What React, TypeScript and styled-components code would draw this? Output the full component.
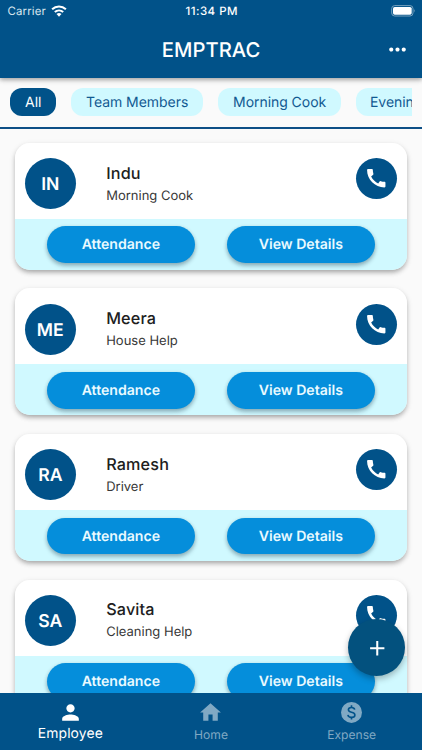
import React from "react";
import styled, { createGlobalStyle } from "styled-components";
import { MdAdd, MdCall, MdHome, MdMoreHoriz, MdPerson } from "react-icons/md";

const navy = "#015289";
const ice = "#d0f9ff";

const GlobalStyle = createGlobalStyle`
  * { box-sizing: border-box; }
  body { margin: 0; background: #fafafa; font-family: Inter, "Liberation Sans", sans-serif; text-rendering: geometricPrecision; }
  svg { display: block; flex: none; }
`;

const Screen = styled.div`
  position: relative;
  display: flex;
  flex-direction: column;
  width: 422px;
  height: 750px;
  overflow: hidden;
  background: #fafafa;
`;

const Header = styled.header`
  position: relative;
  z-index: 1;
  flex: none;
  height: 77.6px;
  background: ${navy};
  color: #fff;
  box-shadow: 0 2px 4px rgba(0, 0, 0, 0.26), 0 1px 7px rgba(0, 0, 0, 0.14);
`;

const StatusBar = styled.div`
  display: grid;
  grid-template-columns: 1fr auto 1fr;
  align-items: center;
  height: 22px;
  padding: 0 6px 0 7.5px;
`;

const Carrier = styled.div`
  display: flex;
  align-items: center;
  gap: 5px;
  font-size: 11.4px;
  letter-spacing: 0.15px;
  color: #dbe8f0;
`;

const Clock = styled.div`
  font-size: 11.5px;
  font-weight: 500;
  letter-spacing: 0.5px;
  color: #fff;
`;

const Battery = styled.div`
  justify-self: end;
`;

const TitleBar = styled.div`
  display: grid;
  grid-template-columns: 1fr auto 1fr;
  align-items: center;
  height: 55px;
  padding: 0 12px;
`;

const Title = styled.h1`
  grid-column: 2;
  margin: 0;
  font-size: 20.2px;
  line-height: 24px;
  font-weight: 500;
  letter-spacing: 0.05px;
`;

const MoreButton = styled.div`
  justify-self: end;
`;

const Filters = styled.nav`
  flex: none;
  display: flex;
  gap: 15.3px;
  height: 51.2px;
  margin: 0 10.2px;
  padding-top: 10.4px;
  overflow: hidden;
`;

const Chip = styled.div<{ $width: number; $active?: boolean }>`
  flex: none;
  width: ${(p) => p.$width}px;
  height: 28.4px;
  border-radius: 12px;
  background: ${(p) => (p.$active ? navy : ice)};
  color: ${(p) => (p.$active ? "#fff" : "#125a92")};
  text-align: center;
  font-size: 14px;
  line-height: 29px;
  letter-spacing: -0.05px;
  white-space: nowrap;
`;

const Rule = styled.div`
  flex: none;
  height: 2px;
  margin-top: -2px;
  background: #0d4f86;
`;

const List = styled.main`
  flex: 1;
  min-height: 0;
  overflow: hidden;
  padding: 14px 15px 0;
`;

const Card = styled.article`
  height: 127.1px;
  margin-bottom: 18.5px;
  border-radius: 15px;
  background: linear-gradient(#fff 76.4px, ${ice} 76.4px);
  box-shadow: 0 3px 5px -1px rgba(0, 0, 0, 0.28), 0 2px 6px rgba(0, 0, 0, 0.12);
`;

const Profile = styled.div`
  display: flex;
  align-items: flex-start;
  height: 76.4px;
  padding: 15.2px 9.8px 0 9.8px;
`;

const Avatar = styled.div`
  width: 51px;
  height: 51px;
  border-radius: 50%;
  background: ${navy};
  color: #fff;
  text-align: center;
  font-size: 17.6px;
  line-height: 53px;
  font-weight: 600;
`;

const Person = styled.div`
  flex: 1;
  padding: 4.7px 0 0 30.4px;
`;

const Name = styled.div`
  font-size: 16.2px;
  line-height: 21px;
  font-weight: 500;
  letter-spacing: 0.15px;
  color: #202020;
`;

const Role = styled.div`
  margin-top: 3px;
  font-size: 13px;
  line-height: 19px;
  color: #383838;
`;

const CallButton = styled.div`
  display: grid;
  place-items: center;
  width: 41px;
  height: 41px;
  border-radius: 50%;
  background: ${navy};
  color: #fff;
`;

const Actions = styled.div`
  display: flex;
  gap: 32.3px;
  padding: 7.2px 0 0 32px;
`;

const ActionButton = styled.div`
  width: 147.7px;
  height: 36.6px;
  border-radius: 19px;
  background: #058edb;
  color: #e9faff;
  text-align: center;
  font-size: 14.1px;
  line-height: 37px;
  font-weight: 600;
  letter-spacing: 0;
  box-shadow: 0 3px 4px rgba(0, 35, 60, 0.28), 0 1px 4px rgba(0, 0, 0, 0.12);
`;

const AddButton = styled.div`
  position: absolute;
  z-index: 2;
  left: 348.4px;
  top: 619.4px;
  display: grid;
  place-items: center;
  width: 57px;
  height: 57px;
  border-radius: 50%;
  background: #03517e;
  color: #fff;
  box-shadow: 0 3px 6px rgba(0, 0, 0, 0.28);
`;

const BottomBar = styled.footer`
  position: relative;
  z-index: 1;
  flex: none;
  display: grid;
  grid-template-columns: repeat(3, 1fr);
  height: 57.5px;
  background: ${navy};
`;

const Tab = styled.div<{ $active?: boolean }>`
  display: flex;
  flex-direction: column;
  align-items: center;
  padding-top: 7.3px;
  color: ${(p) => (p.$active ? "#fff" : "#80a9c4")};
  font-size: ${(p) => (p.$active ? 13.9 : 12.1)}px;
  line-height: ${(p) => (p.$active ? 18 : 19)}px;
  letter-spacing: ${(p) => (p.$active ? 0.12 : 0)}px;
`;

const people = [
  { name: "Indu", role: "Morning Cook" },
  { name: "Meera", role: "House Help" },
  { name: "Ramesh", role: "Driver" },
  { name: "Savita", role: "Cleaning Help" },
];

const WifiIcon = () => (
  <svg width="16" height="12" viewBox="0 0 16 12" fill="none" stroke="#fff" strokeWidth="2">
    <path d="M1.1 4.3C5 .6 11 .6 14.9 4.3" />
    <path d="M3.8 7.1C6.2 4.9 9.8 4.9 12.2 7.1" />
    <path d="M8 11.7 5.5 9.1Q8 7 10.5 9.1Z" fill="#fff" stroke="none" />
  </svg>
);

const BatteryIcon = () => (
  <svg width="25" height="12" viewBox="0 0 25 12">
    <rect x=".7" y=".6" width="21.3" height="10.4" rx="3" fill="none" stroke="#76a0bd" />
    <rect x="2" y="1.9" width="18.7" height="7.8" rx="1.7" fill="#fff" />
    <path d="M23.2 4q1.4 1.7 0 3.5Z" fill="#80a9c4" />
  </svg>
);

const DollarIcon = () => (
  <svg width="25" height="25" viewBox="0 0 25 25" fill="none" stroke={navy} strokeWidth="1.6">
    <circle cx="12.5" cy="12.4" r="10.5" fill="#80a9c4" stroke="none" />
    <path d="M15.7 9.7C15.4 8.1 14.2 7.5 12.5 7.5c-1.9 0-3.1.9-3.1 2.3 0 1.5 1.2 2 3.1 2.4 2.2.5 3.4 1.2 3.4 2.8 0 1.5-1.3 2.4-3.4 2.4-2 0-3.3-.8-3.6-2.5" />
    <path d="M12.5 5.3v2.4M12.5 17.2v2.4" />
  </svg>
);

export default function App() {
  return (
    <>
      <GlobalStyle />
      <Screen>
        <Header>
          <StatusBar>
            <Carrier>Carrier <WifiIcon /></Carrier>
            <Clock>11:34 PM</Clock>
            <Battery><BatteryIcon /></Battery>
          </StatusBar>
          <TitleBar>
            <Title>EMPTRAC</Title>
            <MoreButton><MdMoreHoriz size={25} /></MoreButton>
          </TitleBar>
        </Header>
        <Filters>
          <Chip $width={46} $active>All</Chip>
          <Chip $width={131.3}>Team Members</Chip>
          <Chip $width={123}>Morning Cook</Chip>
          <Chip $width={118}>Evening Cook</Chip>
        </Filters>
        <Rule />
        <List>
          {people.map((p) => (
            <Card key={p.name}>
              <Profile>
                <Avatar>{p.name.slice(0, 2).toUpperCase()}</Avatar>
                <Person>
                  <Name>{p.name}</Name>
                  <Role>{p.role}</Role>
                </Person>
                <CallButton><MdCall size={24.5} /></CallButton>
              </Profile>
              <Actions>
                <ActionButton>Attendance</ActionButton>
                <ActionButton>View Details</ActionButton>
              </Actions>
            </Card>
          ))}
        </List>
        <AddButton><MdAdd size={24.5} /></AddButton>
        <BottomBar>
          <Tab $active><MdPerson size={25} />Employee</Tab>
          <Tab><MdHome size={25} />Home</Tab>
          <Tab><DollarIcon />Expense</Tab>
        </BottomBar>
      </Screen>
    </>
  );
}
